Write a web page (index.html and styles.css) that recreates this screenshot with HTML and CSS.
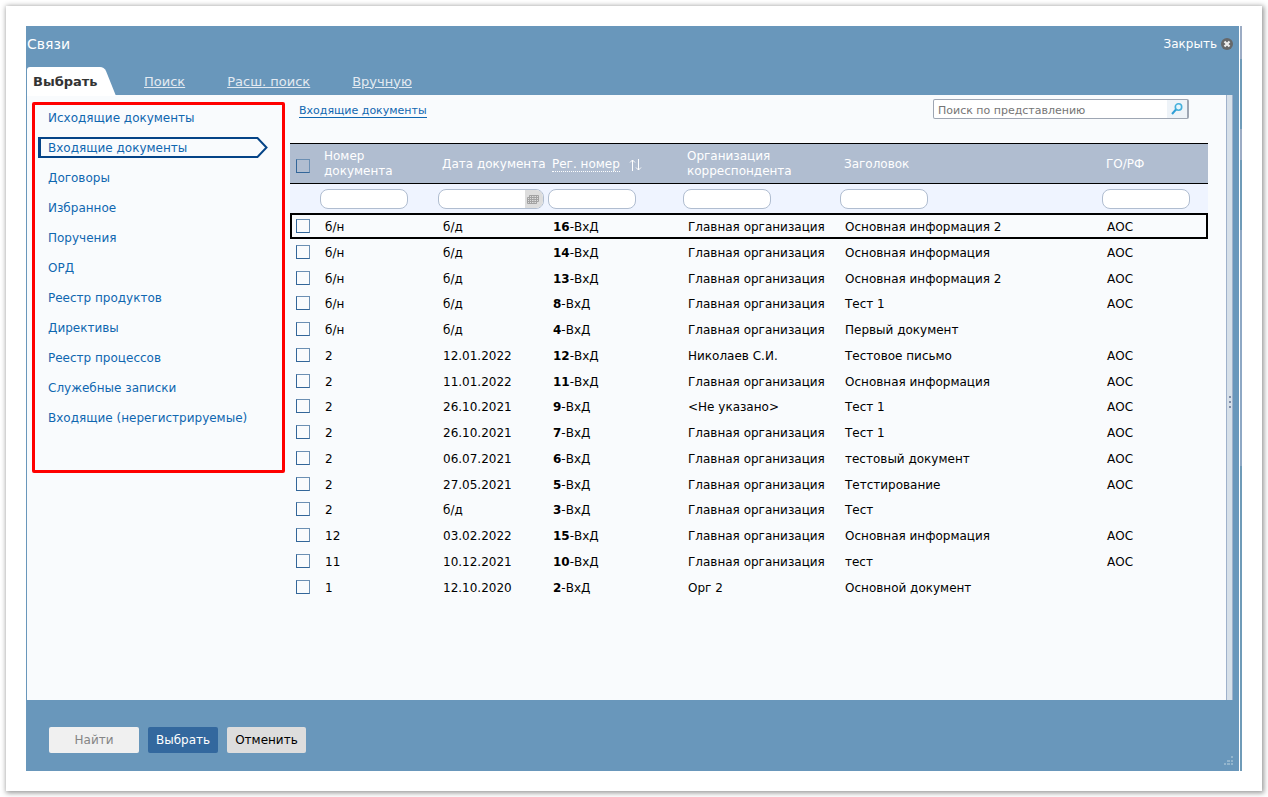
FILE: index.html
```html
<!DOCTYPE html>
<html lang="ru">
<head>
<meta charset="utf-8">
<title>Связи</title>
<link rel="stylesheet" href="styles.css">
</head>
<body>
<div class="card">
  <section class="dialog">
    <header class="titlebar">
      <h1 class="title">Связи</h1>
      <button class="close" type="button">Закрыть
        <svg width="12" height="12" viewBox="0 0 12 12" aria-hidden="true"><circle cx="6" cy="6" r="6" fill="#66686a"/><path d="M3.500 3.500l5 5M8.500 3.500l-5 5" stroke="#eee" stroke-width="2.200"/></svg>
      </button>
    </header>
    <nav class="tabs">
      <a class="tab tab-active" href="#">
        <svg class="tab-shape" width="89" height="29" viewBox="0 0 89 29" aria-hidden="true"><path d="M0 29V3Q0 0 3 0H73Q77 0 79 4L89 29Z" fill="#fff"/></svg>
        <span class="tab-label">Выбрать</span></a>
      <a class="tab" href="#">Поиск</a>
      <a class="tab" href="#">Расш. поиск</a>
      <a class="tab" href="#">Вручную</a>
    </nav>
    <div class="content">
      <nav class="sidebar">
        <a class="side-link" href="#">Исходящие документы</a>
        <a class="side-link side-current" href="#">
          <svg class="arrow" width="230" height="21" viewBox="0 0 230 21" aria-hidden="true"><path d="M1.500 1H219.500L228.500 10.500L219.500 20H1.500Z" fill="none" stroke="#054487" stroke-width="2"/><path d="M1.500 0V21" stroke="#054487" stroke-width="3"/></svg>
          <span class="side-label">Входящие документы</span></a>
        <a class="side-link" href="#">Договоры</a>
        <a class="side-link" href="#">Избранное</a>
        <a class="side-link" href="#">Поручения</a>
        <a class="side-link" href="#">ОРД</a>
        <a class="side-link" href="#">Реестр продуктов</a>
        <a class="side-link" href="#">Директивы</a>
        <a class="side-link" href="#">Реестр процессов</a>
        <a class="side-link" href="#">Служебные записки</a>
        <a class="side-link" href="#">Входящие (нерегистрируемые)</a>
      </nav>
      <main class="main">
        <div class="toolbar">
          <a class="crumb" href="#">Входящие документы</a>
          <form class="search">
            <input class="search-input" type="text" placeholder="Поиск по представлению" aria-label="Поиск по представлению">
            <button class="search-button" type="button" aria-label="Найти в представлении">
              <svg width="14" height="14" viewBox="0 0 14 14" aria-hidden="true"><circle cx="8.500" cy="5" r="3.200" fill="#e6f6fc" stroke="#45b0dc" stroke-width="1.600"/><path d="M6 7.500L2 12" stroke="#2f9fd6" stroke-width="2"/></svg>
            </button>
          </form>
        </div>
        <table class="grid">
          <colgroup><col class="c-check"><col class="c-num"><col class="c-date"><col class="c-reg"><col class="c-org"><col><col class="c-go"></colgroup>
          <thead>
            <tr class="head">
              <th><input class="check" type="checkbox" aria-label="Выбрать все"></th>
              <th>Номер документа</th>
              <th class="nowrap">Дата документа</th>
              <th class="nowrap"><a class="sort" href="#">Рег. номер</a><svg class="sort-icon" width="13" height="12" viewBox="0 0 13 12" aria-hidden="true"><path d="M3.500 12V1M1 3.500L3.500 1L6 3.500M9.500 0V11M7 8.500L9.500 11L12 8.500" fill="none" stroke="#fff"/></svg></th>
              <th>Организация корреспондента</th>
              <th>Заголовок</th>
              <th>ГО/РФ</th>
            </tr>
            <tr class="filters">
              <td></td>
              <td><input class="filter" type="text" aria-label="Номер документа"></td>
              <td><div class="filter-date"><input class="filter-bare" type="text" aria-label="Дата документа"><button class="calendar" type="button" aria-label="Календарь"><svg width="12" height="10" viewBox="0 0 12 10" aria-hidden="true"><path d="M2.500 1.500H11.500V7.500H9.500V9.500H.5V3.500H2.500ZM.5 5.500H11.500M2.500 3.500H11.500M.5 7.500H9.500M2.500 1.500V9.500M4.500 1.500V9.500M7 1.500V9.500M9.500 1.500V9.500" fill="none" stroke="#a2a2a2"/></svg></button></div></td>
              <td><input class="filter" type="text" aria-label="Рег. номер"></td>
              <td><input class="filter" type="text" aria-label="Организация корреспондента"></td>
              <td><input class="filter" type="text" aria-label="Заголовок"></td>
              <td><input class="filter" type="text" aria-label="ГО/РФ"></td>
            </tr>
          </thead>
          <tbody>
            <tr class="selected"><td><input class="check" type="checkbox" aria-label="16-ВхД"></td><td>б/н</td><td>б/д</td><td><b>16</b>-ВхД</td><td>Главная организация</td><td>Основная информация 2</td><td>АОС</td></tr>
            <tr><td><input class="check" type="checkbox" aria-label="14-ВхД"></td><td>б/н</td><td>б/д</td><td><b>14</b>-ВхД</td><td>Главная организация</td><td>Основная информация</td><td>АОС</td></tr>
            <tr><td><input class="check" type="checkbox" aria-label="13-ВхД"></td><td>б/н</td><td>б/д</td><td><b>13</b>-ВхД</td><td>Главная организация</td><td>Основная информация 2</td><td>АОС</td></tr>
            <tr><td><input class="check" type="checkbox" aria-label="8-ВхД"></td><td>б/н</td><td>б/д</td><td><b>8</b>-ВхД</td><td>Главная организация</td><td>Тест 1</td><td>АОС</td></tr>
            <tr><td><input class="check" type="checkbox" aria-label="4-ВхД"></td><td>б/н</td><td>б/д</td><td><b>4</b>-ВхД</td><td>Главная организация</td><td>Первый документ</td><td></td></tr>
            <tr><td><input class="check" type="checkbox" aria-label="12-ВхД"></td><td>2</td><td>12.01.2022</td><td><b>12</b>-ВхД</td><td>Николаев С.И.</td><td>Тестовое письмо</td><td>АОС</td></tr>
            <tr><td><input class="check" type="checkbox" aria-label="11-ВхД"></td><td>2</td><td>11.01.2022</td><td><b>11</b>-ВхД</td><td>Главная организация</td><td>Основная информация</td><td>АОС</td></tr>
            <tr><td><input class="check" type="checkbox" aria-label="9-ВхД"></td><td>2</td><td>26.10.2021</td><td><b>9</b>-ВхД</td><td>&lt;Не указано&gt;</td><td>Тест 1</td><td>АОС</td></tr>
            <tr><td><input class="check" type="checkbox" aria-label="7-ВхД"></td><td>2</td><td>26.10.2021</td><td><b>7</b>-ВхД</td><td>Главная организация</td><td>Тест 1</td><td>АОС</td></tr>
            <tr><td><input class="check" type="checkbox" aria-label="6-ВхД"></td><td>2</td><td>06.07.2021</td><td><b>6</b>-ВхД</td><td>Главная организация</td><td>тестовый документ</td><td>АОС</td></tr>
            <tr><td><input class="check" type="checkbox" aria-label="5-ВхД"></td><td>2</td><td>27.05.2021</td><td><b>5</b>-ВхД</td><td>Главная организация</td><td>Тетстирование</td><td>АОС</td></tr>
            <tr><td><input class="check" type="checkbox" aria-label="3-ВхД"></td><td>2</td><td>б/д</td><td><b>3</b>-ВхД</td><td>Главная организация</td><td>Тест</td><td></td></tr>
            <tr><td><input class="check" type="checkbox" aria-label="15-ВхД"></td><td>12</td><td>03.02.2022</td><td><b>15</b>-ВхД</td><td>Главная организация</td><td>Основная информация</td><td>АОС</td></tr>
            <tr><td><input class="check" type="checkbox" aria-label="10-ВхД"></td><td>11</td><td>10.12.2021</td><td><b>10</b>-ВхД</td><td>Главная организация</td><td>тест</td><td>АОС</td></tr>
            <tr><td><input class="check" type="checkbox" aria-label="2-ВхД"></td><td>1</td><td>12.10.2020</td><td><b>2</b>-ВхД</td><td>Орг 2</td><td>Основной документ</td><td></td></tr>
          </tbody>
        </table>
      </main>
      <div class="splitter"><svg width="2" height="12" viewBox="0 0 2 12" aria-hidden="true"><path d="M0 0H2V2H0ZM0 5H2V7H0ZM0 10H2V12H0Z" fill="#7f8ea8"/></svg></div>
    </div>
    <footer class="footer">
      <button class="btn btn-find" type="button" disabled>Найти</button>
      <button class="btn btn-primary" type="button">Выбрать</button>
      <button class="btn" type="button">Отменить</button>
      <svg class="grip" width="10" height="10" viewBox="0 0 10 10" aria-hidden="true"><path d="M7 0H9V2H7ZM7 4H9V6H7ZM3 4H6V6H3ZM0 7H2V9H0ZM3 7H6V9H3ZM7 7H9V9H7Z" fill="#93b5cd"/></svg>
    </footer>
  </section>
  <div class="edge"></div>
</div>
</body>
</html>
```
FILE: styles.css
```css
* { box-sizing: border-box; }

body {
  margin: 0;
  padding: 6px;
  min-height: 100vh;
  display: flex;
  background: #fff;
  color: #000;
  font: 12px/15px "DejaVu Sans", Verdana, sans-serif;
}

button, input { font: inherit; margin: 0; }
a { color: inherit; text-decoration: none; }

.card {
  flex: 1;
  display: flex;
  padding: 20px;
  background: #fff;
  box-shadow: 1px 1px 5px 1px #999;
}

.dialog {
  flex: 1;
  min-width: 0;
  display: flex;
  flex-direction: column;
  background: #6997bb;
}

.edge {
  width: 2px;
  margin-left: 1px;
  background: linear-gradient(#9cacc4 0 33px, #6f9bb8 33px 103px, #9cacc4 103px 134px, #6f9bb8 134px 204px, #8ea8c4 204px 440px, #6f9bb8 440px);
}

.titlebar {
  height: 40px;
  display: flex;
  justify-content: space-between;
  align-items: center;
  padding: 0 6px 4px 1px;
  color: #fff;
}

.title { margin: 0; font-size: 14px; font-weight: 400; }

.close {
  display: flex;
  align-items: center;
  gap: 4px;
  padding: 0;
  border: 0;
  background: none;
  color: #fff;
}

.tabs {
  height: 29px;
  display: flex;
  align-items: center;
  gap: 42px;
  padding: 1px 0 0 1px;
  font-size: 13px;
}

.tab { color: #e3eaf1; text-decoration: underline; }

.tab-active {
  position: relative;
  display: flex;
  align-items: center;
  width: 75px;
  height: 29px;
  padding-left: 6px;
  color: #333;
  font-weight: 700;
  text-decoration: none;
}

.tab-shape { position: absolute; left: 0; bottom: 0; }
.tab-label { position: relative; }

.content {
  flex: 1;
  display: flex;
  align-items: stretch;
  margin: 0 6px 0 1px;
  background: #f9fbfd;
}

.sidebar {
  width: 253px;
  height: 371px;
  margin: 7px 5px 0;
  padding: 0 3px;
  border: 3px solid #f00;
  border-radius: 2px;
  color: #1067b0;
}

.side-link {
  position: relative;
  display: flex;
  align-items: center;
  height: 30px;
  padding: 0 0 4px 10px;
}

.arrow { position: absolute; left: 0; top: 2px; }
.side-label { position: relative; }

.main { flex: 1; min-width: 0; padding-right: 18px; }

.toolbar {
  display: flex;
  justify-content: space-between;
  align-items: flex-start;
  height: 48px;
  padding: 4px 19px 0 9px;
}

.crumb {
  margin-top: 6px;
  border-bottom: 1px solid #1067b0;
  color: #1067b0;
  font-size: 11px;
  line-height: 12px;
}

.search {
  display: flex;
  width: 256px;
  height: 20px;
  border: 1px solid #9ea6b3;
  border-right-width: 2px;
  border-radius: 2px;
  background: #fff;
}

.search-input {
  flex: 1;
  min-width: 0;
  padding: 3px 4px 0;
  border: 0;
  background: none;
  font-size: 11px;
}

.search-input::placeholder { color: #757575; }

.search-button {
  display: flex;
  align-items: center;
  padding: 0 3px;
  border: 0;
  background: #eef3f8;
}

.splitter {
  width: 7px;
  display: flex;
  align-items: center;
  justify-content: center;
  padding-top: 9px;
  border: solid #9fb1cb;
  border-width: 0 1px;
  background: #d7e0e9;
}

.grid {
  width: 100%;
  table-layout: fixed;
  border-collapse: separate;
  border-spacing: 0;
}

.c-check { width: 30px; }
.c-num { width: 118px; }
.c-date { width: 110px; }
.c-reg { width: 135px; }
.c-org { width: 157px; }
.c-go { width: 106px; }

.grid th, .grid td { padding: 0 0 0 5px; text-align: left; vertical-align: middle; }

.head th {
  height: 41px;
  padding: 1px 24px 0 4px;
  border: solid #000;
  border-width: 1px 0;
  background: #b0bdd0;
  color: #fff;
  font-weight: 400;
}

.head th:first-child { padding: 4px 0 0 6px; }
.grid .nowrap { padding-right: 0; white-space: nowrap; }
.sort { border-bottom: 1px dotted #fff; }
.sort-icon { margin-left: 9px; vertical-align: -3px; }

.grid .filters td { height: 29px; padding: 0; background: #eff4ff; }

.filter, .filter-date {
  display: block;
  width: 88px;
  height: 20px;
  border: 1px solid #b0bdd0;
  border-radius: 8px;
  background: #fff;
}

.filter { padding: 0 6px; }
.filter-date { display: flex; width: 106px; overflow: hidden; }
.filter-bare { flex: 1; min-width: 0; padding: 0 6px; border: 0; background: none; }

.calendar {
  display: flex;
  align-items: center;
  width: 18px;
  padding: 0 2px;
  border: 0;
  background: #ddd;
}

.check {
  appearance: none;
  display: block;
  width: 14px;
  height: 14px;
  border: 1px solid #336699;
  border-top-color: #6b8fb3;
  border-right-color: #6b8fb3;
}

.grid tbody td { height: 26px; padding-top: 2px; }
.grid tbody tr:nth-child(4n) td { height: 25px; }
.grid tbody td:first-child { padding: 0 0 1px 6px; }
.selected { outline: 2px solid #000; outline-offset: -2px; }

.footer {
  position: relative;
  display: flex;
  align-items: center;
  gap: 9px;
  height: 71px;
  padding: 9px 23px 0;
}

.btn {
  height: 26px;
  padding: 0 8px;
  border: 0;
  border-radius: 2px;
  background: #ddd;
  color: #000;
}

.btn-find { width: 90px; background: #f0f0f0; color: #858585; }
.btn-primary { background: #33689e; color: #fff; }
.grip { position: absolute; right: 5px; bottom: 5px; }
```
